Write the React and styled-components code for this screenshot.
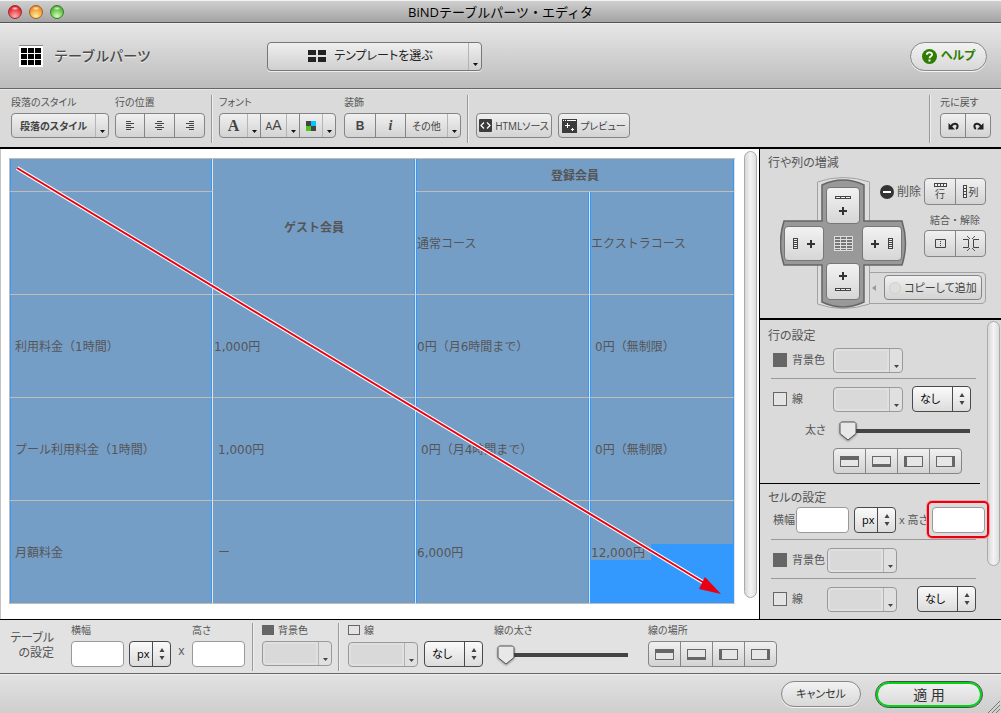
import React, { useState } from "react";
import styled, { createGlobalStyle, css } from "styled-components";

const GlobalStyle = createGlobalStyle`
  *, *::before, *::after { box-sizing: border-box; }
  body {
    margin: 0;
    background: #dadada;
    color: #555;
    font-family: "Open Sans", "Noto Sans CJK JP", sans-serif;
    font-size: 10px;
    line-height: 12px;
    font-feature-settings: "palt";
  }
  button, input, select {
    margin: 0;
    padding: 0;
    font: inherit;
    font-feature-settings: inherit;
    color: inherit;
  }
`;

const raised = "linear-gradient(#f0f0f0, #d3d3d3)";

/* ---------- window frame ---------- */

const Window = styled.div`
  display: flex;
  flex-direction: column;
  min-height: 100vh;
`;

const TitleBar = styled.header`
  display: grid;
  grid-template-columns: 1fr auto 1fr;
  align-items: center;
  height: 23px;
  padding: 0 8px;
  border-top: 1px solid #f2f2f2;
  border-bottom: 1px solid #555;
  background: linear-gradient(#cfcfcf, #a4a4a4);
`;

const Lights = styled.div`
  display: flex;
  gap: 7px;
`;

const Light = styled.button`
  width: 14px;
  height: 14px;
  border: 1px solid ${(p) => p.$edge};
  border-radius: 50%;
  background:
    radial-gradient(ellipse 4px 2px at 50% 20%, #fffc, #fff0),
    radial-gradient(circle at 50% 85%, ${(p) => p.$glow}, ${(p) => p.$tone} 75%);
`;

const WindowTitle = styled.h1`
  margin: 0;
  font-size: 13px;
  font-weight: 400;
  line-height: 20px;
  font-feature-settings: normal;
  color: #000;
`;

const Header = styled.div`
  display: flex;
  align-items: center;
  justify-content: space-between;
  height: 66px;
  padding: 0 14px 0 19px;
  border-top: 1px solid #eee;
  border-bottom: 1px solid #666;
  background: linear-gradient(#e6e6e6, #bcbcbc);
`;

const PartName = styled.h2`
  display: flex;
  align-items: center;
  gap: 11px;
  width: 248px;
  margin: 0;
  font-size: 14px;
  font-weight: 500;
  line-height: 24px;
  font-feature-settings: normal;
  color: #4a4a4a;
  text-shadow: 0 1px #f2f2f2;
`;

const HeaderMain = styled.div`
  flex: 1;
`;

const TemplateButton = styled.button`
  display: flex;
  align-items: stretch;
  width: 215px;
  height: 29px;
  border: 1px solid #777;
  border-radius: 4px;
  background: linear-gradient(#efefef, #cfcfcf);
  box-shadow: 0 1px #efefef;
  font-size: 12px;
  color: #222;
`;

const TemplateLabel = styled.span`
  flex: 1;
  display: flex;
  align-items: center;
  justify-content: center;
  gap: 8px;
  padding-left: 5px;
`;

const CaretCell = styled.span`
  display: flex;
  align-items: flex-end;
  justify-content: center;
  width: 13px;
  padding-bottom: 4px;
  border-left: 1px solid #b4b4b4;
`;

const PillButton = styled.button`
  display: flex;
  align-items: center;
  justify-content: center;
  gap: 4px;
  width: ${(p) => p.$width}px;
  height: ${(p) => p.$height}px;
  border: 1px solid #888;
  border-radius: 15px;
  background: linear-gradient(#f2f2f2, #d8d8d8);
  box-shadow: 0 1px #f4f4f4;
  font-size: 11px;
  color: #333;
  ${(p) =>
    p.$help &&
    css`
      font-size: 12px;
      font-weight: 700;
      color: #2f7d00;
    `}
  ${(p) =>
    p.$primary &&
    css`
      border: 1px solid #4a4a4a;
      box-shadow: inset 0 0 0 2px #00d414;
      font-size: 14px;
    `}
`;

/* ---------- shared controls ---------- */

const Field = styled.div`
  display: flex;
  flex-direction: column;
  gap: 5px;
`;

const Caption = styled.span`
  height: 12px;
  font-size: 10px;
  line-height: 12px;
  white-space: nowrap;
`;

const Inline = styled.div`
  display: flex;
  align-items: center;
  gap: ${(p) => p.$gap || 5}px;
`;

const Segments = styled.div`
  display: flex;
  align-self: flex-start;
  height: ${(p) => p.$height || 26}px;
  border: 1px solid #858585;
  border-radius: 4px;
  background: ${raised};
  overflow: hidden;
`;

const Segment = styled.button`
  display: flex;
  align-items: stretch;
  width: ${(p) => p.$width}px;
  border: 0;
  background: none;
  font-size: 10px;
  color: #444;
  & + & {
    border-left: 1px solid #858585;
  }
`;

const Face = styled.span`
  flex: 1;
  display: flex;
  flex-direction: ${(p) => (p.$stack ? "column" : "row")};
  align-items: center;
  justify-content: center;
  gap: ${(p) => (p.$stack ? 1 : 2)}px;
  font-weight: ${(p) => (p.$bold ? 700 : 400)};
  white-space: nowrap;
`;

const Letter = styled.span`
  font-family: ${(p) => (p.$serif ? '"Liberation Serif", serif' : '"Liberation Sans", sans-serif')};
  font-size: ${(p) => p.$size}px;
  font-style: ${(p) => (p.$italic ? "italic" : "normal")};
  font-weight: ${(p) => (p.$light ? 400 : 700)};
  line-height: 18px;
`;

const ToolButton = styled.button`
  display: flex;
  align-items: center;
  justify-content: center;
  gap: 3px;
  width: ${(p) => p.$width}px;
  height: 25px;
  border: 1px solid #858585;
  border-radius: 4px;
  background: ${raised};
  font-size: 10px;
  white-space: nowrap;
  color: #444;
`;

const ColorButton = styled.button`
  display: flex;
  width: 70px;
  height: 25px;
  border: 1px solid #999;
  border-radius: 4px;
  background: #e0e0e0;
`;

const ColorWell = styled.span`
  flex: 1;
  margin: 2px;
  background: #d9d9d9;
`;

const TextBox = styled.input`
  width: 53px;
  height: 26px;
  padding: 0 4px;
  border: 1px solid #999;
  border-radius: 4px;
  background: #fff;
  font-size: 11px;
`;

const SelectFrame = styled.div`
  position: relative;
  width: ${(p) => p.$width}px;
  height: 26px;
`;

const NativeSelect = styled.select`
  appearance: none;
  width: 100%;
  height: 100%;
  padding: 0 20px 0 7px;
  border: 1px solid #4a4a4a;
  border-radius: 4px;
  background: linear-gradient(#fafafa, #dcdcdc);
  font-size: 11px;
  line-height: 16px;
  color: #000;
`;

const Stepper = styled.span`
  position: absolute;
  top: 1px;
  right: 1px;
  bottom: 1px;
  display: flex;
  align-items: center;
  justify-content: center;
  width: 18px;
  border-left: 1px solid #4a4a4a;
  pointer-events: none;
`;

const CheckLabel = styled.label`
  display: flex;
  align-items: center;
  gap: ${(p) => (p.$small ? 4 : 5)}px;
  font-size: ${(p) => (p.$small ? 10 : 11)}px;
  line-height: ${(p) => (p.$small ? 12 : 16)}px;
  white-space: nowrap;
`;

const Check = styled.input`
  appearance: none;
  width: ${(p) => (p.$small ? 12 : 14)}px;
  height: ${(p) => (p.$small ? 10 : 14)}px;
  border: 1px solid #666;
  background: #e4e4e4;
  &:checked {
    background: #666;
  }
`;

const SliderFrame = styled.div`
  position: relative;
  width: ${(p) => p.$width}px;
  height: 26px;
`;

const Range = styled.input`
  appearance: none;
  display: block;
  width: 100%;
  height: 26px;
  background: linear-gradient(#444, #444) 0 12px / 100% 4px no-repeat;
  &::-webkit-slider-thumb {
    appearance: none;
    width: 16px;
    height: 22px;
  }
`;

const Knob = styled.svg`
  position: absolute;
  top: 4px;
  margin-left: -9px;
  overflow: visible;
  pointer-events: none;
  filter: drop-shadow(0 1px 1px #0006);
`;

/* ---------- toolbar ---------- */

const Toolbar = styled.nav`
  display: flex;
  height: 60px;
  padding: 6px 10px 0 11px;
  border-top: 1px solid #e8e8e8;
  border-bottom: 2px solid #000;
  background: #dadada;
`;

const Tools = styled.div`
  display: flex;
  flex: ${(p) => (p.$grow ? 1 : "none")};
  align-items: flex-end;
  align-self: flex-start;
  gap: ${(p) => p.$gap}px;
`;

const Rule = styled.span`
  width: 2px;
  height: 48px;
  margin: -1px ${(p) => p.$after}px 0 ${(p) => p.$before || 6}px;
  border-left: 1px solid #999;
  border-right: 1px solid #eee;
`;

/* ---------- work area ---------- */

const Main = styled.main`
  flex: 1;
  display: grid;
  grid-template-columns: minmax(0, 1fr) 242px;
  border-bottom: 1px solid #000;
`;

const Editor = styled.section`
  display: flex;
  gap: 9px;
  padding: 0 2px 0 8px;
  border-left: 1px solid #c4c4c4;
  background: #fff;
`;

const Sheet = styled.div`
  position: relative;
  flex: 1;
  padding: 9px 0 15px;
`;

const PriceTable = styled.table`
  width: 100%;
  border-collapse: separate;
  border-spacing: 0;
  border-top: 1px solid #c0bcb8;
  border-left: 1px solid #c0bcb8;
  table-layout: fixed;
  font-family: "DejaVu Sans", "Noto Sans CJK JP", sans-serif;
  font-size: 12px;
  line-height: 16px;
  font-feature-settings: normal;
  color: #555;
`;

const Col = styled.col`
  width: ${(p) => p.$share}%;
`;

const cell = css`
  border-right: 1px solid #e4e4e4;
  border-bottom: 1px solid #c0bcb8;
  background-color: #759ec7;
  box-shadow:
    inset ${(p) => (p.$marked ? 1 : 0)}px 0 #39f,
    inset -1px 0 #39f;
`;

const Th = styled.th`
  ${cell}
  height: 33px;
  padding: 2px 0 0;
`;

const Td = styled.td`
  ${cell}
  height: ${(p) => (p.$short ? 33 : 103)}px;
  padding: 2px 0 0 ${(p) => (p.$indent ? 5 : 1)}px;
  white-space: nowrap;
  ${(p) =>
    p.$partial &&
    css`
      background:
        linear-gradient(#759ec7, #759ec7) 0 0 / 100% 43px no-repeat,
        linear-gradient(#759ec7, #759ec7) 0 0 / 61px 59px no-repeat,
        #39f;
    `}
`;

const Arrow = styled.svg`
  position: absolute;
  top: 9px;
  left: 0;
  pointer-events: none;
`;

const ScrollThumb = styled.div`
  width: 13px;
  margin: ${(p) => p.$margin};
  border: 1px solid #aaa;
  border-radius: 7px;
  background: linear-gradient(90deg, #d8d8d8, #f3f3f3 50%, #dedede);
`;

/* ---------- side column ---------- */

const Side = styled.aside`
  display: flex;
  flex-direction: column;
  border-left: 1px solid #000;
  background: #dadada;
`;

const SideTitle = styled.h3`
  margin: 0 0 ${(p) => p.$below || 0}px;
  font-size: 12px;
  font-weight: 400;
  line-height: 16px;
`;

const StructurePanel = styled.section`
  height: 171px;
  padding: 6px 15px 0 8px;
  border-bottom: 2px solid #000;
`;

const StructureGrid = styled.div`
  position: relative;
  display: grid;
  grid-template-columns: 126px minmax(0, 1fr);
  height: 133px;
  margin: 6px 0 0 12px;
`;

const PadBase = styled.svg`
  position: absolute;
  top: 0;
  left: 0;
`;

const Pad = styled.div`
  position: relative;
  display: grid;
  grid-template-columns: 40px 34px 40px;
  grid-template-rows: 37px 35px 37px;
  gap: 2px;
  align-content: center;
  justify-content: center;
  justify-items: center;
  align-items: center;
`;

const PadButton = styled.button`
  grid-area: ${(p) => p.$area};
  display: flex;
  flex-direction: ${(p) => (p.$tall ? "column" : "row")};
  align-items: center;
  justify-content: center;
  gap: ${(p) => (p.$tall ? 8 : 9)}px;
  width: 100%;
  height: 100%;
  border: 1px solid #777;
  border-radius: 4px;
  background: linear-gradient(#f2f2f2, #d6d6d6);
`;

const PadCenter = styled.span`
  grid-area: 2 / 2;
  display: flex;
`;

const PadTools = styled.div`
  position: relative;
  display: flex;
  flex-direction: column;
  align-items: flex-end;
  padding: 1px 0 0;
`;

const DeleteRow = styled.div`
  display: flex;
  align-items: center;
  gap: 3px;
  white-space: nowrap;
  font-size: 12px;
`;

const MergeLabel = styled.span`
  margin: 9px 6px 3px 0;
  font-size: 10px;
  line-height: 13px;
  font-feature-settings: normal;
`;

const CopyButton = styled(ToolButton)`
  margin: 18px 4px 0 0;
  font-size: 11px;
`;

const Settings = styled.div`
  flex: 1;
  display: flex;
  padding-right: 1px;
`;

const SettingsBody = styled.div`
  flex: 1;
  min-width: 0;
`;

const Section = styled.section`
  padding: ${(p) => p.$top}px 0 ${(p) => p.$bottom}px 8px;
  & + & {
    border-top: 1px solid #000;
  }
`;

const SettingRow = styled.div`
  display: flex;
  align-items: center;
  height: ${(p) => (p.$tall ? 28 : 26)}px;
  padding-left: 5px;
`;

const LabelCell = styled.div`
  width: ${(p) => p.$width}px;
`;

const Divider = styled.hr`
  height: 1px;
  margin: 5px 4px 7px 3px;
  border: 0;
  background: #999;
`;

const SizeLabel = styled.label`
  font-size: 11px;
  line-height: 16px;
  white-space: nowrap;
`;

const Spacer = styled.span`
  width: ${(p) => p.$width}px;
  flex: none;
`;

const SliderRow = styled.div`
  display: flex;
  align-items: center;
  height: 36px;
  padding-left: 37px;
`;

const SliderLabel = styled.label`
  width: 43px;
  font-size: 11px;
`;

const Highlight = styled.span`
  position: relative;
  z-index: 1;
  display: flex;
  margin-right: -8px;
  &::after {
    content: "";
    position: absolute;
    inset: -6px -4px -5px -5px;
    border: 2px solid #e60012;
    border-radius: 5px;
    box-shadow: 0 0 0 1px #f0a0a4, inset 0 0 0 1px #f5d5d5;
    pointer-events: none;
  }
`;

/* ---------- bottom bars ---------- */

const TableBar = styled.section`
  display: flex;
  height: 54px;
  padding: 4px 9px 0;
  border-bottom: 1px solid #666;
  background: #e2e2e2;
`;

const TableBarTitle = styled.h3`
  width: 45px;
  margin: 6px 17px 0 0;
  font-size: 12px;
  font-weight: 400;
  line-height: 15px;
  text-align: right;
`;

const Times = styled.span`
  width: 21px;
  padding-top: 21px;
  font-size: 12px;
  text-align: center;
`;

const Footer = styled.footer`
  display: flex;
  align-items: flex-start;
  justify-content: flex-end;
  gap: 14px;
  height: 39px;
  padding: 6px 1px 0 0;
  border-top: 1px solid #f0f0f0;
  background: linear-gradient(#e2e2e2, #cecece);
`;

const Grip = styled.svg`
  align-self: flex-end;
  margin-left: -9px;
`;

/* ---------- drawings ---------- */

const Caret = ({ tone = "#111" }) => (
  <svg width="5" height="3" viewBox="0 0 5 3">
    <path d="M0 0h5L2.500 3z" fill={tone} />
  </svg>
);

const GridIcon = () => (
  <svg width="24" height="22" viewBox="0 0 24 22">
    <path d="M0 0h24v22H0z" fill="#fff" />
    <path d="M0 .5h24" stroke="#888" />
    {[2, 9, 16].map((x) =>
      [3, 9, 15].map((y) => <rect key={`${x}-${y}`} x={x} y={y} width="6" height="5" fill="#000" />)
    )}
  </svg>
);

const TemplateIcon = () => (
  <svg width="18" height="12" viewBox="0 0 18 12" fill="#222">
    <path d="M0 0h8v5H0zM10 0h8v5h-8zM0 7h8v5H0zM10 7h8v5h-8z" />
  </svg>
);

const HelpIcon = () => (
  <svg width="15" height="15" viewBox="0 0 15 15" fill="none">
    <circle cx="7.500" cy="7.500" r="7.500" fill="#2f7d00" />
    <path d="M4.800 5.800C4.800 2.600 10.200 2.700 10.200 5.600C10.200 7.400 7.500 7.300 7.500 9.300" stroke="#fff" strokeWidth="1.800" />
    <rect x="6.500" y="10.500" width="2" height="2" fill="#fff" />
  </svg>
);

const alignRows = {
  left: "M0 .5h5M0 2.500h8M0 4.500h5M0 6.500h8M0 8.500h5",
  center: "M2 .5h5M0 2.500h9M2 4.500h5M0 6.500h9M2 8.500h5",
  right: "M4 .5h5M1 2.500h8M4 4.500h5M1 6.500h8M4 8.500h5",
};

const AlignIcon = ({ to }) => (
  <svg width="9" height="9" viewBox="0 0 9 9" stroke="#444">
    <path d={alignRows[to]} />
  </svg>
);

const ColorIcon = () => (
  <svg width="10" height="10" viewBox="0 0 10 10">
    <path d="M0 0h10v10H0z" fill="#444" />
    <path d="M5 0h5v5H5z" fill="#00c8ff" />
    <path d="M0 5h5v5H0z" fill="#4fc51b" />
  </svg>
);

const SourceIcon = () => (
  <svg width="13" height="13" viewBox="0 0 13 13" fill="none">
    <rect width="13" height="13" rx="1" fill="#3c3c3c" />
    <path d="M5 3.500L2 6.500L5 9.500M8 3.500L11 6.500L8 9.500" stroke="#fff" strokeWidth="1.200" />
  </svg>
);

const PreviewIcon = () => (
  <svg width="15" height="14" viewBox="0 0 15 14" fill="none">
    <rect width="15" height="14" fill="#3c3c3c" />
    <path d="M1 1.500h1M3 1.500h1M5 1.500h9" stroke="#fff" />
    <path d="M3 6.500h5M5.500 4v5M9 10.500h3M10.500 9v3" stroke="#fff" />
  </svg>
);

const TurnIcon = ({ redo }) => (
  <svg width="11" height="8" viewBox="0 0 11 8" fill="none">
    <g transform={redo ? "matrix(-1 0 0 1 11 0)" : undefined}>
      <path d="M3 4.500C4.500 1 9 .8 9.500 3.500C9.800 5 9.200 6.200 8 6.800" stroke="#222" strokeWidth="2" />
      <path d="M.5 1v6.500H7z" fill="#222" />
    </g>
  </svg>
);

const Steps = () => (
  <svg width="6" height="12" viewBox="0 0 6 12" fill="#444">
    <path d="M3 0l2.500 4h-5zM3 12L.5 8h5z" />
  </svg>
);

const edges = {
  top: "M0 0h19v4H0z",
  bottom: "M0 8h19v3H0z",
  left: "M0 0h3v11H0z",
  right: "M16 0h3v11h-3z",
};

const EdgeIcon = ({ side }) => (
  <svg width="19" height="11" viewBox="0 0 19 11">
    <rect x=".5" y=".5" width="18" height="10" fill="#e6e6e6" stroke="#666" />
    <path d={edges[side]} fill="#666" />
  </svg>
);

const Plus = () => (
  <svg width="8" height="8" viewBox="0 0 8 8" stroke="#333" strokeWidth="2">
    <path d="M0 4h8M4 0v8" />
  </svg>
);

const RowStrip = () => (
  <svg width="16" height="3" viewBox="0 0 16 3">
    <path d="M0 0h16v3H0z" fill="#444" />
    <path d="M1 1.500h4M6 1.500h4M11 1.500h4" stroke="#eee" />
  </svg>
);

const ColumnStrip = () => (
  <svg width="5" height="11" viewBox="0 0 5 11">
    <path d="M0 0h5v11H0z" fill="#444" />
    <path d="M1 1.500h3M1 3.500h3M1 5.500h3M1 7.500h3M1 9.500h3" stroke="#eee" />
  </svg>
);

const RowGlyph = () => (
  <svg width="13" height="4" viewBox="0 0 13 4">
    <path d="M0 0h13v4H0z" fill="#444" />
    <path d="M1 1h2v2H1zM4 1h2v2H4zM7 1h2v2H7zM10 1h2v2h-2z" fill="#eee" />
  </svg>
);

const ColumnGlyph = () => (
  <svg width="4" height="13" viewBox="0 0 4 13">
    <path d="M0 0h4v13H0z" fill="#444" />
    <path d="M1 1h2v2H1zM1 4h2v2H1zM1 7h2v2H1zM1 10h2v2H1z" fill="#eee" />
  </svg>
);

const MergeIcon = () => (
  <svg width="11" height="9" viewBox="0 0 11 9" fill="none" stroke="#444">
    <path d="M.5.5h10v8H.5z" />
    <path d="M5.500 2v6" strokeDasharray="1 1" />
  </svg>
);

const SplitIcon = () => (
  <svg width="16" height="15" viewBox="0 0 16 15" fill="none" stroke="#444">
    <path d="M0 3.500h5.500v8H0M16 3.500h-5.500v8H16" />
    <path d="M4 0h1v1H4zM5 1h1v1H5zM6 2h1v1H6zM11 0h1v1h-1zM10 1h1v1h-1zM9 2h1v1H9zM4 14h1v1H4zM5 13h1v1H5zM6 12h1v1H6zM11 14h1v1h-1zM10 13h1v1h-1zM9 12h1v1H9z" fill="#555" stroke="none" />
  </svg>
);

const MinusIcon = () => (
  <svg width="14" height="14" viewBox="0 0 14 14">
    <circle cx="7" cy="7" r="7" fill="#333" />
    <path d="M3 7h8" stroke="#fff" strokeWidth="2" />
  </svg>
);

const CenterIcon = () => (
  <svg width="19" height="15" viewBox="0 0 19 15">
    <path d="M0 0h19v15H0z" fill="#dedede" />
    {[1, 4, 7, 10, 13].map((y) =>
      [1, 7, 13].map((x) => (
        <rect key={`${x}-${y}`} x={x} y={y} width="5" height={y === 13 ? 1 : 2} fill="#777" />
      ))
    )}
  </svg>
);

const CopyIcon = () => (
  <svg width="12" height="12" viewBox="0 0 12 12" fill="none">
    <circle cx="6" cy="6" r="5.500" fill="#dedede" stroke="#cfcfcf" />
  </svg>
);

const PadShape = () => (
  <PadBase width="208" height="134" viewBox="0 0 208 134" fill="none">
    <path d="M88.500 88v7.500H201q4.500 0 4.500 4.500v22q0 4.500-4.500 4.500H89" stroke="#a2a2a2" />
    <path
      d="M37.500 45V5Q63-4 89.500 5V45M37.500 87V127Q63 136 89.500 127V87"
      fill="#dedede"
      stroke="#a2a2a2"
    />
    <path
      d="M42 8Q63-2 84 8V44H122Q129 66 122 88H84V125Q63 135 42 125V88H4Q-3 66 4 44H42Z"
      fill="#999"
      stroke="#666"
      strokeWidth="1.500"
    />
    <path d="M96 108v6l-4-3z" fill="#999" />
  </PadBase>
);

/* ---------- composed controls ---------- */

const Picker = ({ label }) => (
  <ColorButton aria-label={label}>
    <ColorWell />
    <CaretCell>
      <Caret tone="#444" />
    </CaretCell>
  </ColorButton>
);

const Select = ({ label, value, width }) => (
  <SelectFrame $width={width}>
    <NativeSelect aria-label={label} defaultValue={value}>
      <option>{value}</option>
    </NativeSelect>
    <Stepper>
      <Steps />
    </Stepper>
  </SelectFrame>
);

const Slider = ({ id, width }) => {
  const [value, setValue] = useState(0);
  return (
    <SliderFrame $width={width}>
      <Range
        id={id}
        type="range"
        min="0"
        max="100"
        value={value}
        onChange={(e) => setValue(Number(e.target.value))}
      />
      <Knob width="18" height="20" viewBox="0 0 18 20" style={{ left: `${value}%` }}>
        <path d="M2.500 1h13l1.500 1.500v10L9 19L1 12.500v-10z" fill="#e8e8e8" stroke="#555" />
      </Knob>
    </SliderFrame>
  );
};

const EdgeButtons = () => (
  <Segments>
    {["top", "bottom", "left", "right"].map((side) => (
      <Segment key={side} $width={side === "top" ? 31 : 32} aria-label={side}>
        <Face>
          <EdgeIcon side={side} />
        </Face>
      </Segment>
    ))}
  </Segments>
);

const CheckField = ({ text, checked, small }) => (
  <CheckLabel $small={small}>
    <Check type="checkbox" defaultChecked={checked} $small={small} />
    {text}
  </CheckLabel>
);

const rows = [
  { name: "利用料金（1時間）", cells: ["1,000円", "0円（月6時間まで）", "0円（無制限）"], indent: [0, 0, 1] },
  { name: "プール利用料金（1時間）", cells: ["1,000円", "0円（月4時間まで）", "0円（無制限）"], indent: [1, 1, 1] },
  { name: "月額料金", cells: ["ー", "6,000円", "12,000円"], indent: [1, 0, 0], partial: true },
];

export default function App() {
  return (
    <Window>
      <GlobalStyle />
      <TitleBar>
        <Lights>
          <Light aria-label="閉じる" $edge="#9c2a2a" $tone="#e01c24" $glow="#ffb0b0" />
          <Light aria-label="しまう" $edge="#a5601c" $tone="#f08a1c" $glow="#fff0a0" />
          <Light aria-label="拡大" $edge="#3c7a30" $tone="#4cb030" $glow="#d0ffb0" />
        </Lights>
        <WindowTitle>BiNDテーブルパーツ・エディタ</WindowTitle>
      </TitleBar>

      <Header>
        <PartName>
          <GridIcon />
          テーブルパーツ
        </PartName>
        <HeaderMain>
          <TemplateButton>
            <TemplateLabel>
              <TemplateIcon />
              テンプレートを選ぶ
            </TemplateLabel>
            <CaretCell>
              <Caret />
            </CaretCell>
          </TemplateButton>
        </HeaderMain>
        <PillButton $width={77} $height={29} $help>
          <HelpIcon />
          ヘルプ
        </PillButton>
      </Header>

      <Toolbar>
        <Tools $gap={6}>
          <Field>
            <Caption>段落のスタイル</Caption>
            <Segments $height={25}>
              <Segment $width={96}>
                <Face $bold>段落のスタイル</Face>
                <CaretCell>
                  <Caret />
                </CaretCell>
              </Segment>
            </Segments>
          </Field>
          <Field>
            <Caption>行の位置</Caption>
            <Segments $height={25}>
              <Segment $width={28} aria-label="左揃え">
                <Face><AlignIcon to="left" /></Face>
              </Segment>
              <Segment $width={30} aria-label="中央揃え">
                <Face><AlignIcon to="center" /></Face>
              </Segment>
              <Segment $width={30} aria-label="右揃え">
                <Face><AlignIcon to="right" /></Face>
              </Segment>
            </Segments>
          </Field>
        </Tools>
        <Rule $after={6} />
        <Tools $gap={8}>
          <Field>
            <Caption>フォント</Caption>
            <Segments $height={25}>
              <Segment $width={40} aria-label="書体">
                <Face><Letter $serif $size={16}>A</Letter></Face>
                <CaretCell><Caret /></CaretCell>
              </Segment>
              <Segment $width={39} aria-label="文字サイズ">
                <Face>
                  <span>
                    <Letter $light $size={10}>A</Letter>
                    <Letter $light $size={14}>A</Letter>
                  </span>
                </Face>
                <CaretCell><Caret /></CaretCell>
              </Segment>
              <Segment $width={36} aria-label="文字色">
                <Face><ColorIcon /></Face>
                <CaretCell><Caret /></CaretCell>
              </Segment>
            </Segments>
          </Field>
          <Field>
            <Caption>装飾</Caption>
            <Segments $height={25}>
              <Segment $width={30}>
                <Face><Letter $size={12}>B</Letter></Face>
              </Segment>
              <Segment $width={30}>
                <Face><Letter $serif $italic $size={14}>i</Letter></Face>
              </Segment>
              <Segment $width={55}>
                <Face>その他</Face>
                <CaretCell><Caret /></CaretCell>
              </Segment>
            </Segments>
          </Field>
        </Tools>
        <Rule $after={7} />
        <Tools $gap={6} $grow>
          <Field>
            <Caption />
            <ToolButton $width={76}>
              <SourceIcon />
              HTMLソース
            </ToolButton>
          </Field>
          <ToolButton $width={72}>
            <PreviewIcon />
            プレビュー
          </ToolButton>
        </Tools>
        <Rule $after={9} />
        <Tools $gap={0}>
          <Field>
            <Caption>元に戻す</Caption>
            <Segments $height={25}>
              <Segment $width={24} aria-label="元に戻す">
                <Face><TurnIcon /></Face>
              </Segment>
              <Segment $width={25} aria-label="やり直す">
                <Face><TurnIcon redo /></Face>
              </Segment>
            </Segments>
          </Field>
        </Tools>
      </Toolbar>

      <Main>
        <Editor>
          <Sheet>
            <PriceTable>
              <colgroup>
                <Col $share={28} />
                <Col $share={28} />
                <Col $share={24} />
                <Col $share={20} />
              </colgroup>
              <tbody>
                <tr>
                  <Td $short $marked />
                  <Th rowSpan={2}>ゲスト会員</Th>
                  <Th colSpan={2} $marked>登録会員</Th>
                </tr>
                <tr>
                  <Td $marked />
                  <Td $marked>通常コース</Td>
                  <Td $marked>エクストラコース</Td>
                </tr>
                {rows.map((row) => (
                  <tr key={row.name}>
                    <Td $marked $indent>{row.name}</Td>
                    {row.cells.map((text, i) => (
                      <Td
                        key={i}
                        $marked={i > 0}
                        $indent={row.indent[i] === 1}
                        $partial={row.partial && i === 2}
                      >
                        {text}
                      </Td>
                    ))}
                  </tr>
                ))}
              </tbody>
            </PriceTable>
            <Arrow width="726" height="446" viewBox="0 0 726 446">
              <path d="M8 10L697 426" stroke="#fff" strokeWidth="4" />
              <path d="M8 10L697 426" stroke="#e60012" strokeWidth="2" />
              <path d="M712 436L696 419L690 431z" fill="#e60012" />
            </Arrow>
          </Sheet>
          <ScrollThumb $margin="2px 0 21px" />
        </Editor>

        <Side>
          <StructurePanel>
            <SideTitle>行や列の増減</SideTitle>
            <StructureGrid>
              <PadShape />
              <Pad>
                <PadButton $area="1 / 2" $tall aria-label="上に行を追加">
                  <RowStrip />
                  <Plus />
                </PadButton>
                <PadButton $area="2 / 1" aria-label="左に列を追加">
                  <ColumnStrip />
                  <Plus />
                </PadButton>
                <PadCenter>
                  <CenterIcon />
                </PadCenter>
                <PadButton $area="2 / 3" aria-label="右に列を追加">
                  <Plus />
                  <ColumnStrip />
                </PadButton>
                <PadButton $area="3 / 2" $tall aria-label="下に行を追加">
                  <Plus />
                  <RowStrip />
                </PadButton>
              </Pad>
              <PadTools>
                <DeleteRow>
                  <MinusIcon />
                  削除
                  <Segments $height={27}>
                    <Segment $width={30}>
                      <Face $stack>
                        <RowGlyph />
                        行
                      </Face>
                    </Segment>
                    <Segment $width={30}>
                      <Face>
                        <ColumnGlyph />
                        列
                      </Face>
                    </Segment>
                  </Segments>
                </DeleteRow>
                <MergeLabel>結合・解除</MergeLabel>
                <Inline>
                  <Segments $height={27}>
                    <Segment $width={30} aria-label="結合">
                      <Face><MergeIcon /></Face>
                    </Segment>
                    <Segment $width={30} aria-label="解除">
                      <Face><SplitIcon /></Face>
                    </Segment>
                  </Segments>
                </Inline>
                <CopyButton $width={98}>
                  <CopyIcon />
                  コピーして追加
                </CopyButton>
              </PadTools>
            </StructureGrid>
          </StructurePanel>

          <Settings>
            <SettingsBody>
              <Section $top={8} $bottom={9}>
                <SideTitle $below={3}>行の設定</SideTitle>
                <SettingRow>
                  <LabelCell $width={60}>
                    <CheckField text="背景色" checked />
                  </LabelCell>
                  <Picker label="行の背景色" />
                </SettingRow>
                <Divider />
                <SettingRow>
                  <LabelCell $width={60}>
                    <CheckField text="線" />
                  </LabelCell>
                  <Inline $gap={9}>
                    <Picker label="行の線の色" />
                    <Select label="行の線種" value="なし" width={59} />
                  </Inline>
                </SettingRow>
                <SliderRow>
                  <SliderLabel htmlFor="row-weight">太さ</SliderLabel>
                  <Slider id="row-weight" width={122} />
                </SliderRow>
                <SettingRow>
                  <Spacer $width={60} />
                  <EdgeButtons />
                </SettingRow>
              </Section>
              <Section $top={6} $bottom={0}>
                <SideTitle>セルの設定</SideTitle>
                <SettingRow $tall>
                  <SizeLabel htmlFor="cell-width">横幅</SizeLabel>
                  <Spacer $width={1} />
                  <TextBox id="cell-width" />
                  <Spacer $width={5} />
                  <Select label="セルの単位" value="px" width={42} />
                  <Spacer $width={3} />
                  <SizeLabel htmlFor="cell-height">x 高さ</SizeLabel>
                  <Spacer $width={4} />
                  <Highlight>
                    <TextBox id="cell-height" />
                  </Highlight>
                </SettingRow>
                <Divider />
                <SettingRow>
                  <LabelCell $width={54}>
                    <CheckField text="背景色" checked />
                  </LabelCell>
                  <Picker label="セルの背景色" />
                </SettingRow>
                <Divider />
                <SettingRow>
                  <LabelCell $width={54}>
                    <CheckField text="線" />
                  </LabelCell>
                  <Picker label="セルの線の色" />
                  <Spacer $width={20} />
                  <Select label="セルの線種" value="なし" width={59} />
                </SettingRow>
              </Section>
            </SettingsBody>
            <ScrollThumb $margin="1px 0 53px 7px" />
          </Settings>
        </Side>
      </Main>

      <TableBar>
        <TableBarTitle>テーブルの設定</TableBarTitle>
        <Field>
          <Caption as="label" htmlFor="table-width">横幅</Caption>
          <Inline>
            <TextBox id="table-width" />
            <Select label="テーブルの単位" value="px" width={42} />
          </Inline>
        </Field>
        <Times>x</Times>
        <Field>
          <Caption as="label" htmlFor="table-height">高さ</Caption>
          <TextBox id="table-height" />
        </Field>
        <Rule $before={7} $after={8} />
        <Field>
          <CheckField text="背景色" checked small />
          <Picker label="テーブルの背景色" />
        </Field>
        <Rule $after={8} />
        <Field>
          <CheckField text="線" small />
          <Inline $gap={6}>
            <Picker label="テーブルの線の色" />
            <Select label="テーブルの線種" value="なし" width={59} />
          </Inline>
        </Field>
        <Spacer $width={11} />
        <Field>
          <Caption as="label" htmlFor="table-weight">線の太さ</Caption>
          <Inline>
            <Spacer $width={7} />
            <Slider id="table-weight" width={122} />
          </Inline>
        </Field>
        <Spacer $width={20} />
        <Field>
          <Caption>線の場所</Caption>
          <EdgeButtons />
        </Field>
      </TableBar>

      <Footer>
        <PillButton $width={80} $height={26}>キャンセル</PillButton>
        <PillButton $width={108} $height={27} $primary>適 用</PillButton>
        <Grip width="12" height="12" viewBox="0 0 12 12" stroke="#777">
          <path d="M0 12L12 0M4 12l8-8M8 12l4-4" />
        </Grip>
      </Footer>
    </Window>
  );
}
